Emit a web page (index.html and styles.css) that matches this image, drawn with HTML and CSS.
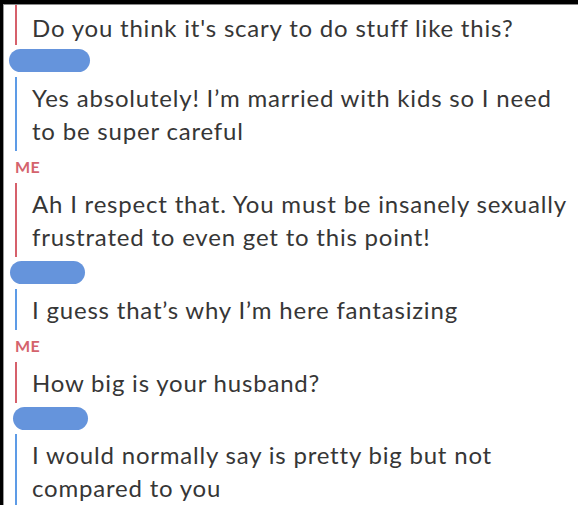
FILE: index.html
```html
<!DOCTYPE html>
<html>
<head>
<meta charset="utf-8">
<link rel="stylesheet" href="styles.css">
</head>
<body>
<div class="frame">
  <div class="chat">
    <div class="msg me first"><p>Do you think it's scary to do stuff like this?</p></div>
    <div class="pill pill-a"></div>
    <div class="msg them"><p>Yes absolutely! I’m married with kids so I need to be super careful</p></div>
    <div class="label">ME</div>
    <div class="msg me"><p>Ah I respect that. You must be insanely sexually frustrated to even get to this point!</p></div>
    <div class="pill pill-b"></div>
    <div class="msg them"><p>I guess that’s why I’m here fantasizing</p></div>
    <div class="label">ME</div>
    <div class="msg me"><p>How big is your husband?</p></div>
    <div class="pill pill-c"></div>
    <div class="msg them"><p>I would normally say is pretty big but not compared to you</p></div>
  </div>
</div>
</body>
</html>
```
FILE: styles.css
```css
html, body {
  margin: 0;
  padding: 0;
  background: #000;
  height: 100%;
  overflow: hidden;
}
.frame {
  box-sizing: border-box;
  height: 505px;
  padding: 4px 0 0 3px;
  background: #000;
}
.chat {
  box-sizing: border-box;
  height: 100%;
  background: #fff;
  border-top: 1px solid #8a8a8a;
  border-left: 1px solid #9a9a9a;
  padding-left: 11px;
  display: flex;
  flex-direction: column;
  font-family: Lato, "Open Sans", sans-serif;
  color: #363636;
  overflow: hidden;
}
.chat > * {
  flex-shrink: 0;
}
.msg {
  border-left: 2px solid;
  padding: 4px 0 4px 15px;
}
.msg p {
  margin: 0;
  font-size: 24px;
  line-height: 33px;
  letter-spacing: 0.8px;
  width: 540px;
}
.msg.first {
  margin-top: -1px;
  padding-top: 7px;
  padding-bottom: 1px;
}
.me { border-color: #d6606b; }
.them { border-color: #5d9be6; }
.label {
  color: #d4636d;
  font-size: 16px;
  line-height: 16px;
  font-weight: 700;
  letter-spacing: 0.5px;
  margin: 8px 0 8px 0;
}
.pill {
  height: 23px;
  border-radius: 12px;
  background: #6594dc;
  margin: 4px 0 5px 0;
}
.pill-a { width: 81px; margin-left: -6px; }
.pill-b { width: 75px; margin-left: -5px; }
.pill-c { width: 75px; margin-left: -2px; margin-bottom: 4px; }
```
